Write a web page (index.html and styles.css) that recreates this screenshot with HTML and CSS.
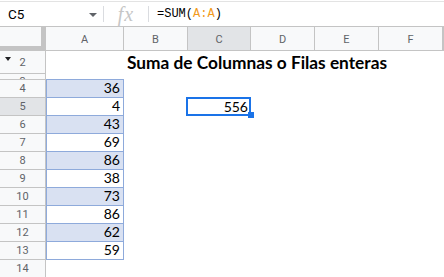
FILE: index.html
```html
<!DOCTYPE html>
<html lang="es">
<head>
<meta charset="utf-8">
<title>Suma de Columnas o Filas enteras</title>
<link rel="stylesheet" href="styles.css">
</head>
<body>
<div class="app">
  <div class="formula-bar">
    <div class="namebox"><span class="name">C5</span><span class="caret"></span></div>
    <div class="sep"></div>
    <div class="fx">fx</div>
    <div class="sep"></div>
    <div class="formula">=SUM(<span class="ref">A:A</span>)</div>
  </div>
  <div class="sheet">
    <div class="row hdr-row">
      <div class="cell c0 corner"></div>
      <div class="cell cA ch">A</div>
      <div class="cell cB ch">B</div>
      <div class="cell cC ch sel">C</div>
      <div class="cell cD ch">D</div>
      <div class="cell cE ch">E</div>
      <div class="cell cF ch">F</div>
      <div class="cell cG ch"></div>
    </div>
    <div class="row r2">
      <div class="cell c0 rh"><span class="tri"></span>2</div>
      <div class="cell cA"></div>
      <div class="cell cB title">Suma de Columnas o Filas enteras</div>
      <div class="cell cC"></div>
      <div class="cell cD"></div>
      <div class="cell cE"></div>
      <div class="cell cF"></div>
      <div class="cell cG"></div>
    </div>
    <div class="row r3">
      <div class="cell c0 rh"><span class="clip">3</span></div>
      <div class="cell cA tbl-top"></div>
      <div class="cell cB"></div>
      <div class="cell cC"></div>
      <div class="cell cD"></div>
      <div class="cell cE"></div>
      <div class="cell cF"></div>
      <div class="cell cG"></div>
    </div>
    <div class="row">
      <div class="cell c0 rh">4</div>
      <div class="cell cA num band">36</div>
      <div class="cell cB"></div><div class="cell cC"></div><div class="cell cD"></div><div class="cell cE"></div><div class="cell cF"></div><div class="cell cG"></div>
    </div>
    <div class="row">
      <div class="cell c0 rh sel">5</div>
      <div class="cell cA num">4</div>
      <div class="cell cB"></div>
      <div class="cell cC num active">556<span class="sel-box"></span><span class="handle"></span></div>
      <div class="cell cD"></div><div class="cell cE"></div><div class="cell cF"></div><div class="cell cG"></div>
    </div>
    <div class="row">
      <div class="cell c0 rh">6</div>
      <div class="cell cA num band">43</div>
      <div class="cell cB"></div><div class="cell cC"></div><div class="cell cD"></div><div class="cell cE"></div><div class="cell cF"></div><div class="cell cG"></div>
    </div>
    <div class="row">
      <div class="cell c0 rh">7</div>
      <div class="cell cA num">69</div>
      <div class="cell cB"></div><div class="cell cC"></div><div class="cell cD"></div><div class="cell cE"></div><div class="cell cF"></div><div class="cell cG"></div>
    </div>
    <div class="row">
      <div class="cell c0 rh">8</div>
      <div class="cell cA num band">86</div>
      <div class="cell cB"></div><div class="cell cC"></div><div class="cell cD"></div><div class="cell cE"></div><div class="cell cF"></div><div class="cell cG"></div>
    </div>
    <div class="row">
      <div class="cell c0 rh">9</div>
      <div class="cell cA num">38</div>
      <div class="cell cB"></div><div class="cell cC"></div><div class="cell cD"></div><div class="cell cE"></div><div class="cell cF"></div><div class="cell cG"></div>
    </div>
    <div class="row">
      <div class="cell c0 rh">10</div>
      <div class="cell cA num band">73</div>
      <div class="cell cB"></div><div class="cell cC"></div><div class="cell cD"></div><div class="cell cE"></div><div class="cell cF"></div><div class="cell cG"></div>
    </div>
    <div class="row">
      <div class="cell c0 rh">11</div>
      <div class="cell cA num">86</div>
      <div class="cell cB"></div><div class="cell cC"></div><div class="cell cD"></div><div class="cell cE"></div><div class="cell cF"></div><div class="cell cG"></div>
    </div>
    <div class="row">
      <div class="cell c0 rh">12</div>
      <div class="cell cA num band">62</div>
      <div class="cell cB"></div><div class="cell cC"></div><div class="cell cD"></div><div class="cell cE"></div><div class="cell cF"></div><div class="cell cG"></div>
    </div>
    <div class="row">
      <div class="cell c0 rh">13</div>
      <div class="cell cA num">59</div>
      <div class="cell cB"></div><div class="cell cC"></div><div class="cell cD"></div><div class="cell cE"></div><div class="cell cF"></div><div class="cell cG"></div>
    </div>
    <div class="row">
      <div class="cell c0 rh">14</div>
      <div class="cell cA"></div>
      <div class="cell cB"></div><div class="cell cC"></div><div class="cell cD"></div><div class="cell cE"></div><div class="cell cF"></div><div class="cell cG"></div>
    </div>
  </div>
</div>
</body>
</html>
```

FILE: styles.css
```css
* { box-sizing: border-box; }
html, body { margin: 0; padding: 0; background: #fff; }
body { width: 444px; height: 277px; overflow: hidden; font-family: Roboto, "Liberation Sans", Arial, sans-serif; }

.app { display: flex; flex-direction: column; }

.formula-bar {
  margin-top: 1px;
  height: 26px;
  border-top: 1px solid #e3e3e3;
  border-bottom: 1px solid #c4c4c4;
  display: flex;
  align-items: center;
}
.namebox {
  width: 103px;
  display: flex;
  align-items: center;
  padding-left: 8px;
  padding-right: 6px;
  height: 100%;
}
.name { font-size: 13.5px; color: #000; }
.caret {
  margin-left: auto;
  width: 0; height: 0;
  border-left: 4px solid transparent;
  border-right: 4px solid transparent;
  border-top: 4px solid #5f6368;
  margin-top: 1px;
}
.sep { width: 1px; height: 16px; background: #dadce0; }
.fx {
  width: 44px;
  text-align: center;
  font-family: "Liberation Serif", "DejaVu Serif", serif;
  font-style: italic;
  font-size: 20px;
  color: #c6c6c6;
  line-height: 20px;
  letter-spacing: 1px;
}
.formula {
  padding-left: 8px;
  font-family: "Liberation Mono", "DejaVu Sans Mono", monospace;
  font-size: 12px;
  color: #000;
}
.ref { color: #f29a1c; }

.sheet { display: flex; flex-direction: column; }
.row { display: flex; height: 18px; }
.hdr-row { height: 24px; }
.r2 { height: 23px; }
.r3 { height: 6px; }

.cell { height: 100%; position: relative; flex: none; }
.c0 { width: 46px; }
.cA { width: 78px; }
.cB { width: 64px; }
.cC { width: 63px; }
.cD { width: 64px; }
.cE { width: 64px; }
.cF { width: 64px; }
.cG { flex: 1; }

.ch {
  background: #f8f9fa;
  border-right: 1px solid #c4c4c4;
  border-bottom: 1px solid #c4c4c4;
  display: flex;
  align-items: center;
  justify-content: center;
  font-size: 11px;
  color: #5f6368;
  padding-top: 1px;
}
.ch.sel { background: #e2e4e7; }
.corner {
  background: #f8f9fa;
  border-right: 5px solid #c4c4c4;
  border-bottom: 5px solid #c4c4c4;
}
.rh {
  background: #f8f9fa;
  border-right: 1px solid #c4c4c4;
  border-bottom: 1px solid #c4c4c4;
  display: flex;
  align-items: center;
  justify-content: center;
  font-size: 11px;
  color: #5f6368;
  overflow: hidden;
}
.rh.sel { background: #e2e4e7; }
.r2 .rh { align-items: center; }
.tri {
  position: absolute;
  left: 5px;
  top: 6px;
  width: 0; height: 0;
  border-left: 3px solid transparent;
  border-right: 3px solid transparent;
  border-top: 4px solid #202124;
}
.clip { line-height: 14px; align-self: flex-start; margin-top: 1px; }

.title {
  white-space: nowrap;
  overflow: visible;
  font-family: Lato, "Open Sans", sans-serif;
  font-weight: bold;
  font-size: 17.3px;
  color: #000;
  display: flex;
  align-items: flex-end;
  padding-left: 3px;
  padding-bottom: 2px;
  line-height: 19px;
  z-index: 1;
}

.tbl-top { border-bottom: 1px solid #8eaadb; }
.num {
  display: flex;
  align-items: flex-end;
  justify-content: flex-end;
  font-family: Lato, "Open Sans", sans-serif;
  font-size: 14px;
  line-height: 16px;
  color: #000;
  padding-right: 3px;
  padding-bottom: 1px;
}
.cA.num {
  border-left: 1px solid #8eaadb;
  border-right: 1px solid #8eaadb;
  border-bottom: 1px solid #8eaadb;
}
.band { background: #d9e1f2; }

.active { padding-right: 3px; }
.sel-box {
  position: absolute;
  left: -2px; top: -1px; right: 0; bottom: 0;
  border: 2px solid #1a73e8;
}
.handle {
  position: absolute;
  right: -3px; bottom: -2px;
  width: 6px; height: 6px;
  background: #1a73e8;
}
```
